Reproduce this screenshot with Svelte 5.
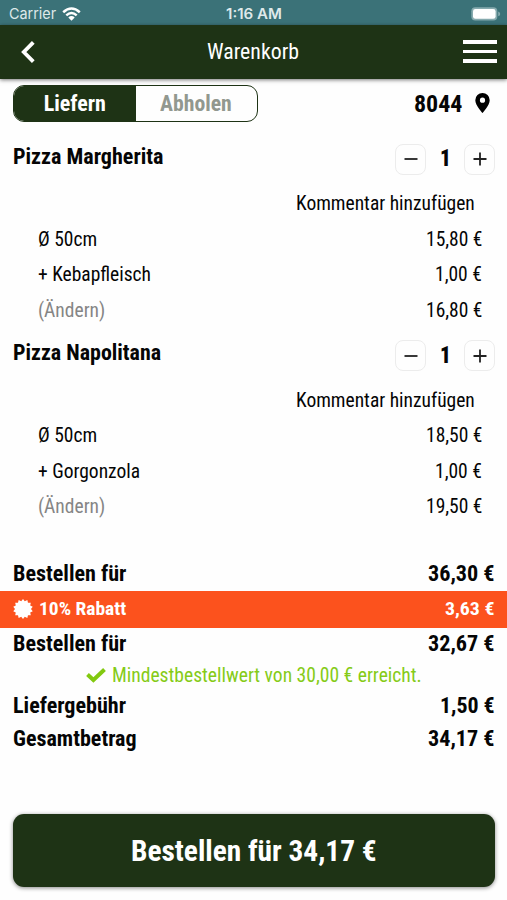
<script>
  const items = [
    { name: 'Pizza Margherita', size: '15,80 €', extra: '+ Kebapfleisch', total: '16,80 €' },
    { name: 'Pizza Napolitana', size: '18,50 €', extra: '+ Gorgonzola', total: '19,50 €' }
  ];

  const spikes = 14;
  const seal = Array.from({ length: spikes * 2 }, (_, i) => {
    const r = i % 2 ? 8 : 10;
    const a = (Math.PI * i) / spikes;
    return `${(10 + r * Math.sin(a)).toFixed(2)},${(10 - r * Math.cos(a)).toFixed(2)}`;
  }).join(' ');

  // Scales a label horizontally to the given width.
  function fit(node, width) {
    const inner = node.firstElementChild;
    const apply = () => {
      inner.style.transform = `scaleX(${width / inner.offsetWidth})`;
    };
    apply();
    document.fonts?.ready.then(apply);
  }
</script>

{#snippet label(text, width)}
  <span class="fit" style:width="{width}px" use:fit={width}><span>{text}</span></span>
{/snippet}

<div class="app">
  <div class="status">
    <div class="carrier">
      {@render label('Carrier', 47)}
      <svg width="19" height="14" viewBox="0 0 19 14" fill="none" stroke="#fff" stroke-width="2.5">
        <path d="M1.2 5.3Q9.5-2.2 17.8 5.3M4.3 8.4Q9.5 3.7 14.7 8.4" />
        <path d="M6.3 10.4Q9.5 7.7 12.7 10.4L9.5 13.7Z" fill="#fff" stroke="none" />
      </svg>
    </div>
    <div class="time">{@render label('1:16 AM', 56)}</div>
    <svg class="battery" width="30" height="14" viewBox="0 0 30 14">
      <rect x=".3" y=".3" width="26" height="13.2" rx="4" fill="#86aaae" />
      <rect x="2" y="2" width="22.6" height="9.8" rx="2.4" fill="#fff" />
      <path d="M27.2 4.6Q29.2 5.3 29.2 7T27.2 9.3Z" fill="#86aaae" />
    </svg>
  </div>

  <header>
    <svg width="14" height="22" viewBox="0 0 14 22" fill="none" stroke="#fff" stroke-width="3.8"><path d="M12.3 1.4 2.8 11 12.3 20.6" /></svg>
    {@render label('Warenkorb', 92)}
    <div class="menu"><i></i><i></i><i></i></div>
  </header>

  <div class="mode">
    <div class="tabs">
      <div class="tab active">{@render label('Liefern', 62)}</div>
      <div class="tab">{@render label('Abholen', 72)}</div>
    </div>
    <div class="zip">
      {@render label('8044', 49)}
      <svg width="15" height="20" viewBox="0 0 15 20"><path fill="#000" fill-rule="evenodd" d="M7.5 0A7.2 7.2 0 0 0 .3 7.2C.3 12.3 7.5 20 7.5 20S14.7 12.3 14.7 7.2A7.2 7.2 0 0 0 7.5 0ZM7.5 4.6A2.6 2.6 0 1 1 7.5 9.8 2.6 2.6 0 0 1 7.5 4.6Z" /></svg>
    </div>
  </div>

  {#each items as item, i}
    <section>
      <div class="head">
        <div class="name">{@render label(item.name, i ? 148 : 150)}</div>
        <div class="stepper">
          <div class="step"><svg width="14" height="14"><path d="M0.5 7H13.5" /></svg></div>
          <b>{@render label('1', 11)}</b>
          <div class="step"><svg width="14" height="14"><path d="M.5 7H13.5M7 .5V13.5" /></svg></div>
        </div>
      </div>
      <div class="line comment">{@render label('Kommentar hinzufügen', 179)}</div>
      <div class="line">{@render label('Ø 50cm', 59)}{@render label(item.size, 56)}</div>
      <div class="line">{@render label(item.extra, i ? 102 : 113)}{@render label('1,00 €', 47)}</div>
      <div class="line"><span class="change">{@render label('(Ändern)', 67)}</span>{@render label(item.total, 56)}</div>
    </section>
  {/each}

  <div class="totals">
    <div class="total">{@render label('Bestellen für', 113)}{@render label('36,30 €', 67)}</div>
    <div class="discount">
      <svg width="20" height="20" viewBox="0 0 20 20"><polygon points={seal} fill="#fff" /></svg>
      {@render label('10% Rabatt', 87)}
      <span class="amount">{@render label('3,63 €', 49)}</span>
    </div>
    <div class="total">{@render label('Bestellen für', 113)}{@render label('32,67 €', 67)}</div>
    <div class="minimum">
      <svg width="20" height="15" viewBox="0 0 20 15" fill="none" stroke="#82c910" stroke-width="4"><path d="M1.5 6.5 7.4 12 18.5 1.5" /></svg>
      {@render label('Mindestbestellwert von 30,00 € erreicht.', 310)}
    </div>
    <div class="total">{@render label('Liefergebühr', 113)}{@render label('1,50 €', 55)}</div>
    <div class="total">{@render label('Gesamtbetrag', 124)}{@render label('34,17 €', 67)}</div>
  </div>

  <div class="order">{@render label('Bestellen für 34,17 €', 246)}</div>
</div>

<style>
  :global(body) { background: #fefefe; }
  .app {
    width: 507px;
    height: 900px;
    overflow: hidden;
    display: flex;
    flex-direction: column;
    color: #050505;
    font: 400 19.5px/1.2 'Roboto Condensed', Roboto, sans-serif;
    font-stretch: 75%;
  }
  .app * { box-sizing: border-box; }
  .fit { display: inline-block; white-space: nowrap; flex: none; }
  .fit > span { display: inline-block; transform-origin: 0 50%; }
  svg { display: block; flex: none; }

  .status {
    height: 25px;
    flex: none;
    background: #3b7278;
    color: #dfe9ea;
    display: flex;
    align-items: center;
    justify-content: space-between;
    padding: 2px 6px 0 9px;
    font: 400 15px/18px Inter, sans-serif;
  }
  .carrier { display: flex; align-items: center; gap: 6px; width: 217px; }
  .time { flex: 1; font-weight: 600; font-size: 14px; }

  header {
    height: 54px;
    flex: none;
    background: #1e3315;
    color: #fff;
    display: flex;
    align-items: center;
    justify-content: space-between;
    padding: 0 10px 1px 21px;
    font-size: 22.5px;
    box-shadow: 0 1px 4px #0008;
  }
  header .fit { margin-left: 8px; }
  .menu { width: 34px; display: flex; flex-direction: column; gap: 5.5px; }
  .menu i { height: 3.8px; background: #fff; }

  .mode {
    height: 62px;
    flex: none;
    display: flex;
    justify-content: space-between;
    align-items: flex-start;
    padding: 6px 17px 0 13px;
    font-weight: 700;
    font-size: 22px;
  }
  .tabs { display: flex; width: 245px; height: 37px; border: 1px solid #1e3315; border-radius: 11px; overflow: hidden; }
  .tab { flex: 1; display: flex; align-items: center; justify-content: center; padding-top: 1px; color: #92988f; }
  .active { background: #1e3315; color: #fff; }
  .zip { display: flex; align-items: center; height: 36px; gap: 12px; font-size: 23.5px; }
  .zip .fit { padding-top: 2px; }

  section { flex: none; height: 186.5px; margin-bottom: 10px; }
  .head { height: 44.5px; display: flex; justify-content: space-between; align-items: flex-start; padding: 2.5px 12px 0 13px; font-size: 21.5px; font-weight: 700; }
  .stepper { display: flex; align-items: center; width: 100px; justify-content: space-between; }
  .stepper b { font-size: 23px; }
  .step { width: 31px; height: 31px; border: 1.5px solid #ececec; border-radius: 8px; display: flex; align-items: center; justify-content: center; }
  .step path { stroke: #222; stroke-width: 1.8; fill: none; }
  .line { height: 35.5px; display: flex; align-items: center; justify-content: space-between; padding: 1px 25px 0 38px; }
  .comment { justify-content: flex-end; padding-right: 32px; }
  .change { color: #858585; }

  .totals { padding-top: 23.5px; flex: none; }
  .total { height: 33px; display: flex; align-items: center; justify-content: space-between; padding: 0 12px 0 13px; font-size: 21.5px; font-weight: 700; }
  .discount { height: 37px; background: #fc521d; color: #fff; display: flex; align-items: center; padding: 0 13px; gap: 6px; font-weight: 700; font-size: 19px; }
  .amount { margin-left: auto; }
  .minimum { height: 29px; display: flex; align-items: center; justify-content: center; gap: 6px; padding-top: 1px; color: #85cb17; }

  .order {
    flex: none;
    margin: 58.5px 12px 0 13px;
    height: 73px;
    padding-top: 1px;
    border-radius: 11px;
    background: #1e3315;
    color: #fff;
    display: flex;
    align-items: center;
    justify-content: center;
    font-size: 29px;
    font-weight: 700;
    box-shadow: 0 1px 4px #0007;
  }
</style>
